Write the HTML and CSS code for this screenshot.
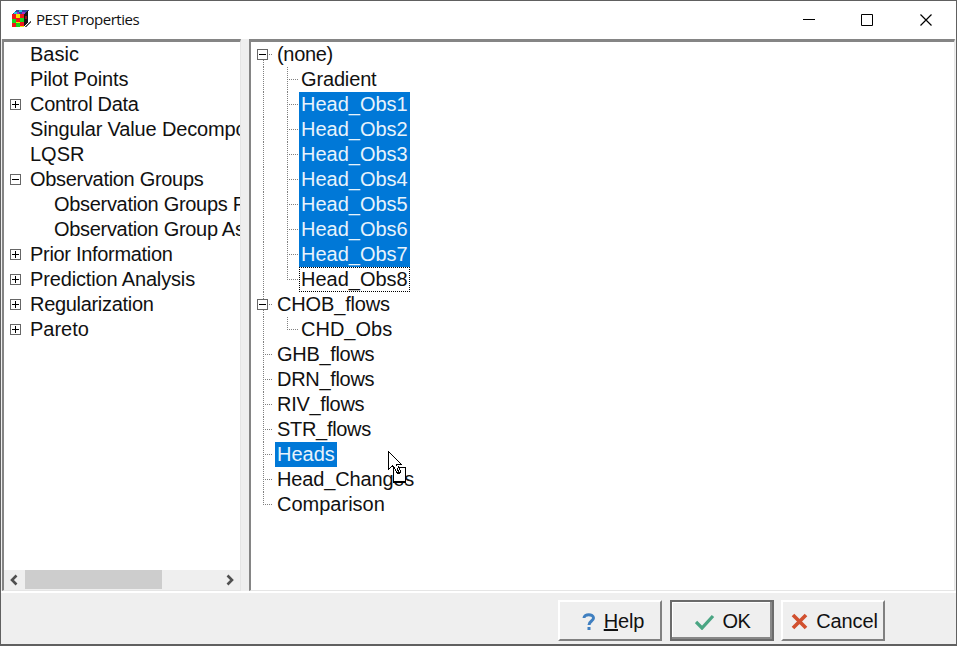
FILE: index.html
```html
<!DOCTYPE html>
<html lang="en">
<head>
<meta charset="utf-8">
<title>PEST Properties</title>
<link rel="stylesheet" href="styles.css">
</head>
<body>
<div class="window">
  <header class="titlebar">
    <svg class="app-icon" width="20" height="18" viewBox="0 0 20 18" shape-rendering="crispEdges">
      <path d="M4 0h13l-4 5H0z" fill="#334a9c"/><path d="M2 2h3v2H2zM7 0h3v2H7z" fill="#20c8e0"/><path d="M5 2h2v2H5zM10 2h3v2h-3z" fill="#a030d0"/>
      <path d="M0 4h12v13H0z" fill="#f4e600"/>
      <path d="M0 4h4v5H0zM4 8h4v4H4zM8 4h4v4H8zM0 13h4v4H0zM8 12h4v4H8z" fill="#f01818"/>
      <path d="M0 9h4v4H0zM8 8h4v4H8zM4 13h4v4H4z" fill="#18d818"/>
      <path d="M12 4l4-3v11l-4 5z" fill="#151515"/><path d="M13 6h2v3h-2z" fill="#901818"/><path d="M15 14l4-4v2l-4 5h-3z" fill="#555"/>
    </svg>
    <h1 class="title">PEST Properties</h1>
    <svg class="caption-buttons" width="140" height="14" viewBox="0 0 140 14" fill="none" stroke="#000">
      <path d="M6 6.500h12M64.500 1.500h11v11h-11z"/><path stroke-width="1.200" d="M123.500 1.500l11 11M134.500 1.500l-11 11"/>
    </svg>
  </header>
  <main class="panes">
    <nav class="pane nav">
      <ul class="tree">
        <li class="row">Basic</li>
        <li class="row snug">Pilot Points</li>
        <li class="row tight"><i class="box plus"></i>Control Data</li>
        <li class="row snug">Singular Value Decomposition</li>
        <li class="row">LQSR</li>
        <li class="row tight"><i class="box"></i>Observation Groups</li>
        <li class="row sub tight">Observation Groups Properties</li>
        <li class="row sub tight">Observation Group Assignments</li>
        <li class="row tight"><i class="box plus"></i>Prior Information</li>
        <li class="row snug"><i class="box plus"></i>Prediction Analysis</li>
        <li class="row tight"><i class="box plus"></i>Regularization</li>
        <li class="row"><i class="box plus"></i>Pareto</li>
      </ul>
      <div class="scrollbar">
        <svg width="21" height="20" viewBox="0 0 21 20" fill="none" stroke="#505050" stroke-width="2.600"><path d="M12.500 5.500L8 10l4.500 4.500"/></svg>
        <div class="thumb"></div>
        <svg class="right" width="21" height="20" viewBox="0 0 21 20" fill="none" stroke="#505050" stroke-width="2.600"><path d="M8.500 5.500L13 10l-4.500 4.500"/></svg>
      </div>
    </nav>
    <section class="pane groups">
      <ul class="tree lines">
        <li class="row first tight"><i class="box"></i><span>(none)</span></li>
        <li class="row child snug"><span>Gradient</span></li>
        <li class="row child"><span class="sel">Head_Obs1</span></li>
        <li class="row child"><span class="sel">Head_Obs2</span></li>
        <li class="row child"><span class="sel">Head_Obs3</span></li>
        <li class="row child"><span class="sel">Head_Obs4</span></li>
        <li class="row child"><span class="sel">Head_Obs5</span></li>
        <li class="row child"><span class="sel">Head_Obs6</span></li>
        <li class="row child"><span class="sel">Head_Obs7</span></li>
        <li class="row child end"><span class="focus">Head_Obs8</span></li>
        <li class="row snug"><i class="box"></i><span>CHOB_flows</span></li>
        <li class="row child end"><span>CHD_Obs</span></li>
        <li class="row tight"><span>GHB_flows</span></li>
        <li class="row tight"><span>DRN_flows</span></li>
        <li class="row tight"><span>RIV_flows</span></li>
        <li class="row tight"><span>STR_flows</span></li>
        <li class="row"><span class="sel">Heads</span></li>
        <li class="row snug"><span>Head_Changes</span></li>
        <li class="row last"><span>Comparison</span></li>
      </ul>
      <svg class="cursor" width="20" height="34" viewBox="0 0 20 34" fill="#fff" stroke="#000" shape-rendering="crispEdges">
        <path d="M1.500 1.500v18l4-4 2 4h4l-2-5h5z"/><path d="M6.500 17.500h12v14h-12z"/><path d="M18 18v14H6" fill="none"/><path d="M6 16l5 8 3-2-3-6"/><path d="M10 18l2 5" fill="none"/>
      </svg>
    </section>
  </main>
  <footer class="buttons">
    <button class="btn"><svg width="14" height="20" viewBox="0 0 14 20" fill="none" stroke="#3f7fc0" stroke-width="3"><path d="M2 6c0-4.500 9.500-4.500 9.500 0 0 3-4.500 3-4.500 7M7 15v3"/></svg><span><u>H</u>elp</span></button>
    <button class="btn default"><svg width="20" height="16" viewBox="0 0 20 16" fill="none" stroke="#4aa583" stroke-width="3.300"><path d="M1 8l6 6L18 2"/></svg><span>OK</span></button>
    <button class="btn"><svg width="17" height="17" viewBox="0 0 17 17" fill="none" stroke="#d1502f" stroke-width="3.700"><path d="M2 2l13 13M15 2L2 15"/></svg><span>Cancel</span></button>
  </footer>
</div>
</body>
</html>
```
FILE: styles.css
```css
* { box-sizing: border-box; }
body { margin: 0; width: 957px; height: 646px; overflow: hidden; background: #555; font-family: "Liberation Sans", Arial, sans-serif; font-size: 20px; color: #111; }
.window { height: 646px; display: flex; flex-direction: column; border: 1px solid #606060; border-bottom-width: 2px; background: #efefef; }
.titlebar { height: 38px; flex: none; display: flex; align-items: center; background: #fff; padding-left: 11px; }
.app-icon { flex: none; margin: 0 4px 2px 0; }
.title { margin: 0 0 2px; font: 15px "Open Sans", sans-serif; letter-spacing: -.48px; }
.caption-buttons { margin-left: auto; margin-right: 19px; }
.panes { height: 552px; flex: none; display: flex; gap: 8px; padding: 0 1px; background: #efefef; }
.pane { position: relative; border: solid; border-width: 3px 1px 1px 2px; border-color: #858585 #e5e5e5 #e5e5e5 #858585; background: #fff; overflow: hidden; }
.nav { width: 239px; display: flex; flex-direction: column; }
.groups { flex: 1; }
.tree { list-style: none; margin: 0; padding: 0; }
.row { position: relative; height: 25px; line-height: 25px; white-space: nowrap; overflow: hidden; padding-left: 26px; }
.snug { letter-spacing: -.15px; }
.tight { letter-spacing: -.31px; }
.sub { padding-left: 50px; }
.box { position: absolute; left: 6px; top: 7px; width: 11px; height: 11px; border: 1px solid #666; background: #fff; z-index: 1; }
.box::before, .plus::after { content: ""; position: absolute; left: 1px; top: 4px; width: 7px; height: 1px; background: #000; }
.plus::after { left: 4px; top: 1px; width: 1px; height: 7px; }
.scrollbar { margin-top: auto; height: 20px; display: flex; background: #efefef; }
.thumb { width: 137px; height: 19px; background: #cdcdcd; }
.scrollbar .right { margin-left: auto; }
.lines .row { padding-left: 24px; }
.lines .child { padding-left: 48px; }
.lines .row::before { content: ""; position: absolute; left: 12px; top: 0; width: 10px; height: 25px; background: repeating-linear-gradient(#808080 0 1px, transparent 1px 2px) 0 0 / 1px 25px no-repeat, repeating-linear-gradient(90deg, #808080 0 1px, transparent 1px 2px) 0 12px / 10px 1px no-repeat; }
.lines .child::before { background-size: 1px 25px, 0 0; }
.lines .child::after { content: ""; position: absolute; left: 36px; top: 0; width: 11px; height: 25px; background: repeating-linear-gradient(#808080 0 1px, transparent 1px 2px) 0 0 / 1px 25px no-repeat, repeating-linear-gradient(90deg, #808080 0 1px, transparent 1px 2px) 0 12px / 11px 1px no-repeat; }
.lines .end::after, .lines .last::before { height: 13px; }
.lines .first::before { background-position: 0 12px; }
.row span { display: inline-block; height: 25px; padding: 0 2px; vertical-align: top; }
.row .sel { background: #0078d7; color: #e8f3fc; }
.row .focus { outline: 1px dotted #000; outline-offset: -1px; }
.cursor { position: absolute; left: 136px; top: 408px; }
.buttons { flex: 1; display: flex; gap: 7px; align-items: flex-start; justify-content: flex-end; padding: 7px 71px 0 0; border-top: 2px solid #fff; }
.btn { width: 104px; height: 41px; display: flex; align-items: center; justify-content: center; gap: 8px; padding: 2px 0 0 3px; border: solid; border-width: 2px; border-color: #fff #808080 #808080 #fff; background: #efefef; font: inherit; color: inherit; letter-spacing: -.15px; }
.btn:first-child { margin-right: 1px; padding-left: 6px; }
.default { padding-left: 1px; letter-spacing: -.5px; border: 2px solid #6b6b6b; box-shadow: inset -2px -2px #888, inset 1px 1px #fff; }
```
